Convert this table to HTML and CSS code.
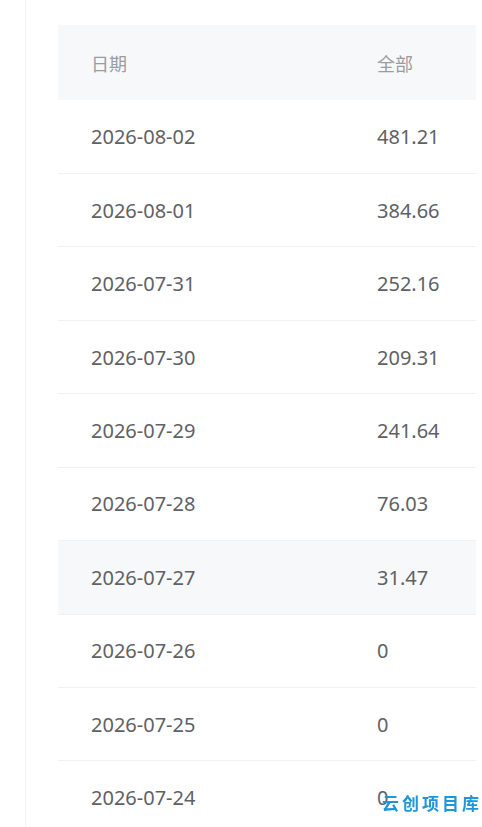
FILE: index.html
```html
<!DOCTYPE html>
<html lang="zh-CN">
<head>
    <meta charset="UTF-8">
    <meta name="viewport" content="width=device-width, initial-scale=1.0">
    <title>收益明细</title>
    <link rel="stylesheet" href="styles.css">
</head>
<body>
    <div class="panel">
        <table class="data-table">
            <thead>
                <tr>
                    <th class="col-date">日期</th>
                    <th>全部</th>
                </tr>
            </thead>
            <tbody>
                <tr><td class="col-date">2026-08-02</td><td>481.21</td></tr>
                <tr><td class="col-date">2026-08-01</td><td>384.66</td></tr>
                <tr><td class="col-date">2026-07-31</td><td>252.16</td></tr>
                <tr><td class="col-date">2026-07-30</td><td>209.31</td></tr>
                <tr><td class="col-date">2026-07-29</td><td>241.64</td></tr>
                <tr><td class="col-date">2026-07-28</td><td>76.03</td></tr>
                <tr class="hover"><td class="col-date">2026-07-27</td><td>31.47</td></tr>
                <tr><td class="col-date">2026-07-26</td><td>0</td></tr>
                <tr><td class="col-date">2026-07-25</td><td>0</td></tr>
                <tr><td class="col-date">2026-07-24</td><td>0</td></tr>
            </tbody>
        </table>
    </div>

    <div class="watermark">云创项目库</div>
</body>
</html>
```

FILE: styles.css
```css
html, body {
    margin: 0;
    padding: 0;
    background: #fff;
    height: 100%;
    overflow: hidden;
}
body {
    font-family: 'Noto Sans', 'Noto Sans CJK SC', sans-serif;
    color: #606266;
}
.panel {
    margin-left: 25px;
    border-left: 1px solid #f1f2f4;
    padding: 25px 0 0 32px;
    min-height: 100%;
    box-sizing: border-box;
}
.data-table {
    width: 418px;
    border-collapse: collapse;
    table-layout: fixed;
}
.data-table th,
.data-table td {
    text-align: left;
    padding: 0;
    box-sizing: border-box;
}
.data-table th {
    height: 75px;
    background-color: #f7f8fa;
    color: #9a9ca3;
    font-family: 'Noto Sans CJK SC', sans-serif;
    font-weight: normal;
    font-size: 18px;
}
.data-table td {
    height: 73.44px;
    border-bottom: 1px solid #f0f1f4;
    font-size: 20px;
    color: #5f6166;
}
.data-table .col-date {
    width: 319px;
    padding-left: 33px;
}
.data-table tr.hover td {
    background-color: #f7f8fa;
}
.watermark {
    position: fixed;
    right: 0;
    bottom: 14px;
    color: #1d97da;
    font-family: 'Noto Sans CJK SC', sans-serif;
    font-weight: bold;
    font-size: 17px;
    letter-spacing: 3px;
    line-height: 20px;
}
```
